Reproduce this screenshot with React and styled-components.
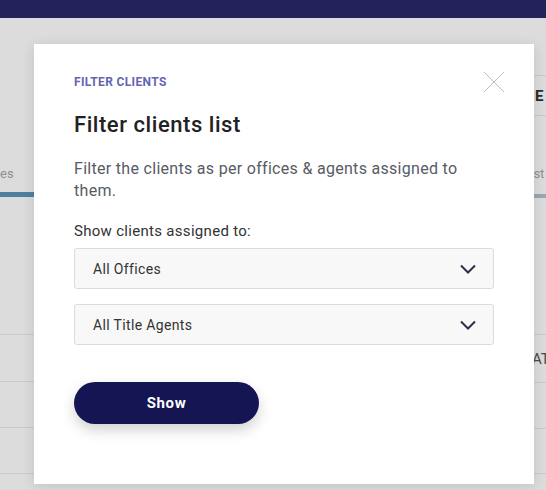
import React from "react";
import styled, { createGlobalStyle } from "styled-components";

const GlobalStyle = createGlobalStyle`
    html, body {
        margin: 0;
        padding: 0;
        background: #dcdcdc;
        font-family: "Roboto", "Liberation Sans", sans-serif;
    }
`;

const Page = styled.div`
    position: relative;
    width: 546px;
    height: 490px;
    overflow: hidden;
    background: #dcdcdc;
`;

const TopBar = styled.div`
    height: 18px;
    background: #23235a;
`;

// faded page content visible behind the overlay
const Backdrop = styled.div`
    display: flex;
    justify-content: space-between;
    height: 472px;
`;

const SideColumn = styled.div`
    width: ${(p) => p.width}px;
    display: flex;
    flex-direction: column;
    overflow: hidden;
`;

const Row = styled.div`
    flex: none;
    height: ${(p) => p.height}px;
    box-sizing: border-box;
    border-top: ${(p) => (p.line ? "1px solid #c9c9c9" : "none")};
    display: flex;
    align-items: center;
    padding-left: ${(p) => p.indent || 0}px;
    white-space: nowrap;
    font-weight: ${(p) => (p.bold ? 700 : 400)};
    color: ${(p) => p.color || "#8f8f8f"};
    font-size: ${(p) => p.size || 13}px;
`;

const ProgressBar = styled.div`
    flex: none;
    height: ${(p) => p.height}px;
    background: ${(p) => p.color};
`;

const Modal = styled.div`
    position: absolute;
    left: 34px;
    top: 44px;
    width: 500px;
    height: 440px;
    box-sizing: border-box;
    background: #ffffff;
    box-shadow: 0 2px 12px rgba(0, 0, 0, 0.12);
    padding: 31px 40px 0 40px;
`;

const CloseButton = styled.button`
    position: absolute;
    right: 29px;
    top: 27px;
    width: 22px;
    height: 22px;
    padding: 0;
    border: none;
    background: none;
    cursor: pointer;
`;

const Eyebrow = styled.div`
    font-size: 12px;
    font-weight: 700;
    letter-spacing: 0.35px;
    color: #6565b0;
    line-height: 14px;
`;

const Title = styled.h2`
    margin: 22px 0 0;
    font-size: 22px;
    font-weight: 500;
    letter-spacing: 0.55px;
    color: #222222;
    line-height: 28px;
`;

const Description = styled.p`
    margin: 19px 0 0;
    font-size: 16px;
    line-height: 22px;
    letter-spacing: 0.3px;
    color: #575b66;
    width: 400px;
`;

const Label = styled.div`
    margin-top: 20px;
    font-size: 15px;
    letter-spacing: 0.3px;
    color: #333333;
    line-height: 18px;
`;

const SelectBox = styled.div`
    margin-top: ${(p) => p.top}px;
    height: 41px;
    box-sizing: border-box;
    border: 1px solid #dcdcdc;
    border-radius: 3px;
    background: #f8f8f8;
    display: flex;
    align-items: center;
    justify-content: space-between;
    padding: 0 17px 0 18px;
    font-size: 14px;
    letter-spacing: 0.35px;
    color: #333333;
`;

const ShowButton = styled.button`
    margin-top: 37px;
    width: 185px;
    height: 42px;
    border: none;
    border-radius: 21px;
    background: #151553;
    color: #ffffff;
    font-family: inherit;
    font-size: 15px;
    font-weight: 700;
    letter-spacing: 0.6px;
    box-shadow: 0 6px 14px rgba(0, 0, 0, 0.18);
    cursor: pointer;
`;

const Chevron = () => (
    <svg width="16" height="10" viewBox="0 0 16 10" fill="none">
        <path d="M1 1.5l7 7 7-7" stroke="#2a2f4a" strokeWidth="2" />
    </svg>
);

const CloseIcon = () => (
    <svg width="22" height="22" viewBox="0 0 22 22" fill="none">
        <path d="M1 1l20 20M21 1L1 21" stroke="#bdbdbd" strokeWidth="1" />
    </svg>
);

const App = () => {
    return (
        <Page>
            <GlobalStyle />
            <TopBar />
            <Backdrop>
                <SideColumn width={34}>
                    <Row height={145} />
                    <Row height={20}>es</Row>
                    <Row height={9} />
                    <ProgressBar height={5} color="#4f7fa0" />
                    <Row height={137} />
                    <Row height={47} line />
                    <Row height={46} line />
                    <Row height={46} line />
                    <Row height={17} line />
                </SideColumn>
                <SideColumn width={22}>
                    <Row height={57} />
                    <Row
                        height={40}
                        line
                        bold
                        size={15}
                        indent={11}
                        color="#2a2a2a"
                    >
                        E
                    </Row>
                    <Row height={48} line />
                    <Row height={20} indent={2}>
                        Est
                    </Row>
                    <Row height={11} />
                    <ProgressBar height={4} color="#9ba6b0" />
                    <Row height={136} />
                    <Row height={48} line size={15} indent={8} color="#4a4a4a">
                        AT
                    </Row>
                    <Row height={46} line />
                    <Row height={45} line />
                    <Row height={17} line />
                </SideColumn>
            </Backdrop>
            <Modal>
                <CloseButton aria-label="Close">
                    <CloseIcon />
                </CloseButton>
                <Eyebrow>FILTER CLIENTS</Eyebrow>
                <Title>Filter clients list</Title>
                <Description>
                    Filter the clients as per offices &amp; agents assigned to
                    them.
                </Description>
                <Label>Show clients assigned to:</Label>
                <SelectBox top={8}>
                    All Offices
                    <Chevron />
                </SelectBox>
                <SelectBox top={15}>
                    All Title Agents
                    <Chevron />
                </SelectBox>
                <ShowButton>Show</ShowButton>
            </Modal>
        </Page>
    );
};

export default App;
